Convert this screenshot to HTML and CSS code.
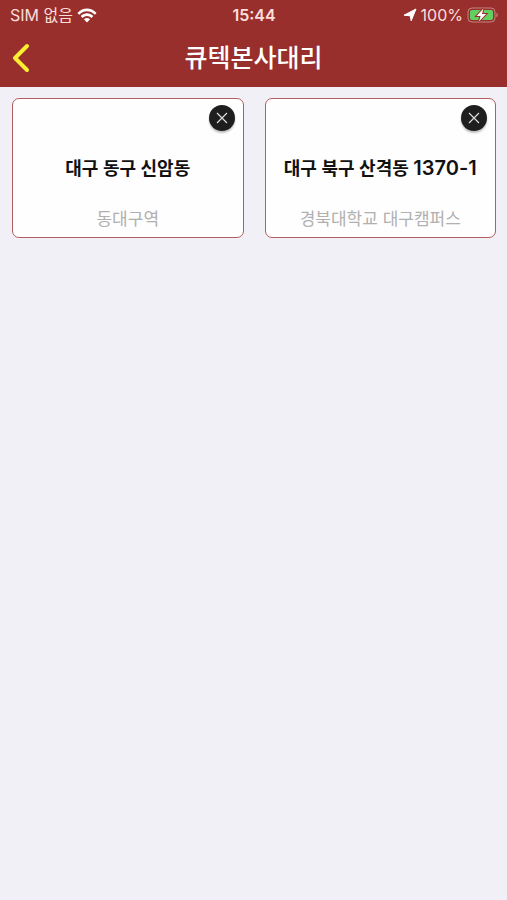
FILE: index.html
```html
<!DOCTYPE html>
<html lang="ko">
<head>
<meta charset="utf-8">
<meta name="viewport" content="width=device-width, initial-scale=1">
<title>큐텍본사대리</title>
<link rel="stylesheet" href="styles.css">
</head>
<body>
<header class="header">
  <div class="status">
    <div class="status-side">
      <span>SIM 없음</span>
      <svg class="wifi" viewBox="0 0 20 15" aria-hidden="true">
        <path d="M0.4 4.9C6-.9 14-.9 19.6 4.9L17.8 6.7C13.2 2.2 6.8 2.2 2.2 6.7Z"/>
        <path d="M3.7 8.1C7.4 4.4 12.6 4.4 16.3 8.1L14.5 9.9C11.8 7.2 8.2 7.2 5.5 9.9Z"/>
        <path d="M6.9 11.3C8.8 9.5 11.2 9.5 13.1 11.3L10 14.5Z"/>
      </svg>
    </div>
    <time class="clock">15:44</time>
    <div class="status-side status-end">
      <svg class="location" viewBox="0 0 14 14" aria-hidden="true">
        <path d="M13 1 8.2 12.8 7.2 7.8 1 7.2Z"/>
      </svg>
      <span>100%</span>
      <svg class="battery" viewBox="0 0 31 16" aria-hidden="true">
        <rect class="battery-case" x="1" y="1" width="27" height="14" rx="4"/>
        <rect class="battery-level" x="3" y="3" width="23" height="10" rx="2"/>
        <path class="battery-case-tip" d="M29.4 5.7C31.2 6.6 31.2 9.4 29.4 10.3Z"/>
        <path class="bolt" d="M16.4 1.6 9.6 8.9H13.6L12 14.4 19.2 7.1H15Z"/>
      </svg>
    </div>
  </div>
  <nav class="nav">
    <button class="back" type="button" aria-label="뒤로">
      <svg viewBox="0 0 20 32" aria-hidden="true"><path d="M16 4 4 16 16 28"/></svg>
    </button>
    <h1 class="title">큐텍본사대리</h1>
  </nav>
</header>
<main class="cards">
  <article class="card">
    <button class="close" type="button" aria-label="삭제">
      <svg viewBox="0 0 26 26" aria-hidden="true"><path d="M8 8 18 18M18 8 8 18"/></svg>
    </button>
    <h2 class="address">대구 동구 신암동</h2>
    <p class="place">동대구역</p>
  </article>
  <article class="card">
    <button class="close" type="button" aria-label="삭제">
      <svg viewBox="0 0 26 26" aria-hidden="true"><path d="M8 8 18 18M18 8 8 18"/></svg>
    </button>
    <h2 class="address">대구 북구 산격동 <span class="lot">1370-1</span></h2>
    <p class="place">경북대학교 대구캠퍼스</p>
  </article>
</main>
</body>
</html>
```
FILE: styles.css
```css
* {
  box-sizing: border-box;
}

body {
  margin: 0;
  min-height: 100vh;
  background: #f0f0f6;
  font-family: Inter, "Noto Sans CJK KR", sans-serif;
}

h1, h2, p {
  margin: 0;
}

button {
  padding: 0;
  border: 0;
  background: none;
}

svg {
  display: block;
}

.header {
  background: #982f2c;
  color: #fff;
}

.status {
  display: grid;
  grid-template-columns: 1fr auto 1fr;
  align-items: center;
  height: 30px;
  padding: 0 9px 0 10px;
  font-size: 16px;
  line-height: 20px;
  color: #fbdedb;
}

.status-side {
  display: flex;
  align-items: center;
  gap: 4px;
}

.status-end {
  justify-content: flex-end;
}

.clock {
  font-weight: 600;
}

.wifi {
  width: 20px;
  height: 15px;
  fill: #fff;
}

.location {
  width: 14px;
  height: 14px;
  fill: #fff;
  stroke: #fff;
  stroke-linejoin: round;
}

.battery {
  width: 31px;
  height: 16px;
}

.battery-case {
  fill: none;
  stroke: #c58582;
}

.battery-case-tip {
  fill: #c58582;
}

.battery-level {
  fill: #62cf60;
}

.bolt {
  fill: #fff;
  stroke: #982f2c;
  stroke-width: 2;
  paint-order: stroke;
}

.nav {
  display: grid;
  grid-template-columns: 44px 1fr 44px;
  align-items: center;
  height: 57px;
  padding-bottom: 2px;
}

.back {
  height: 44px;
  padding-left: 11px;
}

.back svg {
  width: 20px;
  height: 32px;
  fill: none;
  stroke: #fbee32;
  stroke-width: 4;
  stroke-linecap: round;
  stroke-linejoin: round;
}

.title {
  font-size: 25px;
  font-weight: 500;
  line-height: 32px;
  text-align: center;
}

.cards {
  display: grid;
  grid-template-columns: 1fr 1fr;
  gap: 21px;
  padding: 11px 11px 0 12px;
}

.card {
  display: flex;
  flex-direction: column;
  align-items: center;
  padding: 6px 8px;
  border: 1px solid #b45d5f;
  border-radius: 7px;
  background: #fefefe;
}

.close {
  align-self: flex-end;
  width: 26px;
  height: 26px;
  border-radius: 50%;
  background: #1e1e1e;
  box-shadow: 0 2px 2px rgba(0, 0, 0, 0.25);
}

.close svg {
  width: 26px;
  height: 26px;
  fill: none;
  stroke: #ddd;
  stroke-width: 1.2;
}

.address {
  margin-top: 25px;
  font-size: 18px;
  font-weight: 600;
  line-height: 26px;
  white-space: nowrap;
  color: #111;
}

.lot {
  font-size: 20px;
  line-height: 20px;
}

.place {
  margin-top: 25px;
  font-size: 17px;
  line-height: 24px;
  white-space: nowrap;
  color: #b0b0b0;
}
```
